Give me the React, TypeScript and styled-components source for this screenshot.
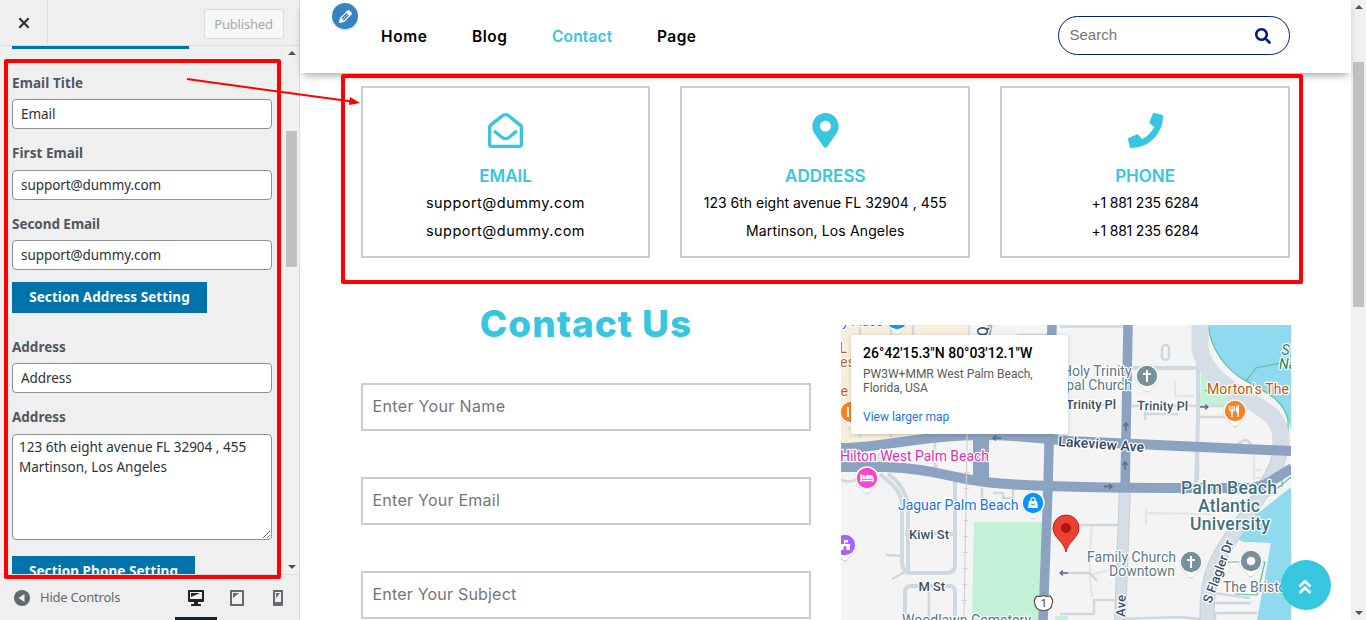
import React from "react";
import styled, { createGlobalStyle } from "styled-components";
import { FaRegEnvelopeOpen, FaMapMarkerAlt, FaPhone, FaSearch } from "react-icons/fa";

const GlobalStyle = createGlobalStyle`
  * { box-sizing: border-box; }
  body { margin: 0; background: #fff; overflow: hidden; }
`;

const adminFont = `"Noto Sans", "Open Sans", sans-serif`;
const themeFont = `Inter, "Open Sans", sans-serif`;
const accent = "#36c6e0";

const Screen = styled.div`
  position: relative;
  display: flex;
  width: 1366px;
  height: 620px;
  overflow: hidden;
`;

/* ---------- customizer sidebar ---------- */

const Sidebar = styled.aside`
  display: flex;
  flex-direction: column;
  flex: none;
  width: 300px;
  background: #efefef;
  border-right: 1px solid #dcdcde;
  font-family: ${adminFont};
`;

const SidebarHeader = styled.div`
  display: flex;
  justify-content: space-between;
  flex: none;
  height: 46px;
  border-bottom: 1px solid #dcdcde;
`;

const CloseButton = styled.button`
  display: flex;
  align-items: center;
  justify-content: center;
  width: 48px;
  height: 45px;
  padding: 1px 0 0;
  border: 0;
  border-right: 1px solid #dcdcde;
  background: none;
`;

const PublishButton = styled.button`
  width: 80px;
  height: 30px;
  margin: 9px 15px 0 0;
  padding: 0 1px 0 0;
  border: 1px solid #dcdcde;
  border-radius: 3px;
  background: #f6f7f7;
  color: #a7aaad;
  font: 13px ${adminFont};
  letter-spacing: -0.2px;
`;

const SidebarBody = styled.div`
  display: flex;
  flex: 1;
  min-height: 0;
`;

const Controls = styled.div`
  flex: 1;
  overflow: hidden;
  padding-left: 12px;
`;

const PreviousHeading = styled.div`
  width: 177px;
  height: 3px;
  margin-bottom: 21.9px;
  background: #0073aa;
`;

const Field = styled.label`
  display: block;
  width: 260px;
  & + & { margin-top: 12.3px; }
`;

const FieldLabel = styled.span<{ $spacing: number }>`
  display: block;
  height: 28.2px;
  line-height: 24px;
  color: #50575e;
  font-size: 13.5px;
  font-weight: 700;
  letter-spacing: ${(p) => p.$spacing}px;
`;

const TextInput = styled.input`
  display: block;
  width: 260px;
  height: 30px;
  padding: 0 8px;
  border: 1px solid #8c8f94;
  border-radius: 4px;
  background: #fff;
  color: #2c3338;
  font: 13.5px ${adminFont};
  letter-spacing: -0.07px;
`;

const TextArea = styled.textarea`
  display: block;
  width: 260px;
  height: 106px;
  padding: 2px 6px;
  border: 1px solid #8c8f94;
  border-radius: 4px;
  background: #fff;
  color: #2c3338;
  font: 13.5px/20px ${adminFont};
`;

const SectionHeading = styled.h3<{ $width: number; $above: number }>`
  width: ${(p) => p.$width}px;
  height: 31px;
  margin: ${(p) => p.$above}px 0 21.8px;
  background: #0073aa;
  color: #fff;
  font-size: 13.5px;
  font-weight: 700;
  line-height: 30px;
  text-align: center;
  letter-spacing: 0.07px;
  white-space: nowrap;
`;

const ScrollTrack = styled.div`
  display: flex;
  flex-direction: column;
  align-items: center;
  flex: none;
  width: 15px;
  background: #f1f1f1;
`;

const ScrollArrow = styled.div<{ $down?: boolean }>`
  flex: none;
  width: 0;
  height: 0;
  margin: ${(p) => (p.$down ? "auto 0 5px" : "5px 0 0")};
  border: 4px solid transparent;
  ${(p) => (p.$down ? "border-bottom: 0; border-top-color: #505050;" : "border-top: 0; border-bottom-color: #505050;")}
`;

const ScrollThumb = styled.div<{ $offset: number; $length: number }>`
  width: 11px;
  height: ${(p) => p.$length}px;
  margin-top: ${(p) => p.$offset}px;
  background: #c1c1c1;
`;

const SidebarFooter = styled.div`
  display: flex;
  align-items: center;
  flex: none;
  height: 46px;
  padding-left: 14px;
  border-top: 1px solid #dcdcde;
  color: #646970;
`;

const HideControls = styled.button`
  display: flex;
  align-items: center;
  gap: 10px;
  flex: 1;
  padding: 0;
  border: 0;
  background: none;
  color: inherit;
  font: 13px ${adminFont};
  letter-spacing: -0.22px;
`;

const HideLabel = styled.span`
  padding-bottom: 2px;
`;

const DeviceButton = styled.button<{ $active?: boolean }>`
  display: flex;
  align-items: center;
  justify-content: center;
  width: 42px;
  height: 45px;
  margin-left: -1px;
  padding: 3px 0 0;
  border: 0;
  border-bottom: 3px solid ${(p) => (p.$active ? "#1d2327" : "transparent")};
  background: none;
  color: ${(p) => (p.$active ? "#1d2327" : "#646970")};
`;

/* ---------- site preview ---------- */

const Preview = styled.main`
  display: flex;
  flex-direction: column;
  width: 1051px;
  font-family: ${themeFont};
`;

const SiteHeader = styled.header`
  position: relative;
  display: flex;
  align-items: flex-start;
  flex: none;
  height: 73px;
  padding-left: 81px;
  background: #fff;
  box-shadow: 0 5px 8px -3px rgba(0, 0, 0, 0.38);
`;

const EditBadge = styled.button`
  position: absolute;
  left: 32px;
  top: 3px;
  display: flex;
  align-items: center;
  justify-content: center;
  width: 26px;
  height: 26px;
  padding: 0;
  border: 0;
  border-radius: 50%;
  background: #3582c4;
  box-shadow: 0 2px 1px rgba(46, 68, 83, 0.15);
`;

const Nav = styled.nav`
  display: flex;
  flex: 1;
  line-height: 73px;
`;

const NavLink = styled.a<{ $active?: boolean; $width: number; $spacing: number }>`
  width: ${(p) => p.$width}px;
  color: ${(p) => (p.$active ? accent : "#000")};
  font-size: 15.5px;
  font-weight: 600;
  letter-spacing: ${(p) => p.$spacing}px;
`;

const SearchBox = styled.form`
  display: flex;
  align-items: center;
  width: 232px;
  height: 39px;
  margin: 16px 61px 0 0;
  padding: 0 18px 0 10.5px;
  border: 1px solid #001c80;
  border-radius: 20px;
  color: #001c80;
`;

const SearchInput = styled.input`
  flex: 1;
  min-width: 0;
  padding: 0 0 2px;
  border: 0;
  background: none;
  font: 15px "Liberation Sans", Arial, sans-serif;
  &::placeholder { color: #757575; }
`;

const Cards = styled.section`
  display: grid;
  grid-template-columns: repeat(3, 1fr);
  gap: 30px;
  width: 929.4px;
  margin: 13px 0 0 60.6px;
`;

const Card = styled.article`
  display: flex;
  flex-direction: column;
  align-items: center;
  height: 172px;
  padding-top: 25px;
  border: 2px solid #ccc;
  color: ${accent};
`;

const CardTitle = styled.h4`
  margin: 15px 0 0;
  font-size: 17px;
  font-weight: 600;
  line-height: 26px;
`;

const CardLine = styled.p<{ $size: number; $spacing: number }>`
  margin: 0;
  color: #000;
  font-size: ${(p) => p.$size}px;
  line-height: 28px;
  letter-spacing: ${(p) => p.$spacing}px;
  white-space: nowrap;
`;

const ContactArea = styled.section`
  display: grid;
  grid-template-columns: 450px 450px;
  gap: 30px;
  margin-left: 61px;
`;

const Form = styled.form`
  display: flex;
  flex-direction: column;
`;

const FormTitle = styled.h2`
  height: 125px;
  margin: 0;
  padding-top: 41px;
  color: ${accent};
  font-size: 37px;
  font-weight: 800;
  line-height: 50px;
  letter-spacing: 1px;
  text-align: center;
`;

const FormInput = styled.input<{ $spacing: number }>`
  height: 48px;
  margin-bottom: 46px;
  padding: 0 9.5px 2px;
  border: 2px solid #ccc;
  font: 16px ${themeFont};
  letter-spacing: ${(p) => p.$spacing}px;
  &::placeholder { color: #757575; }
`;

const MapFrame = styled.div`
  position: relative;
  height: 295px;
  margin-top: 67px;
`;

const MapCard = styled.div`
  position: absolute;
  left: 10px;
  top: 10px;
  width: 217px;
  height: 99px;
  padding: 9px 12px;
  border-radius: 2px;
  background: #fff;
  box-shadow: 0 1px 4px rgba(0, 0, 0, 0.2);
  font: 12px/14px Roboto, sans-serif;
  color: #5b5b5b;
`;

const Place = styled.div`
  margin-bottom: 5px;
  color: #000;
  font-size: 14px;
  font-weight: 500;
  line-height: 18px;
  white-space: nowrap;
`;

const MapLink = styled.a`
  display: block;
  margin-top: 15px;
  color: #1a73e8;
`;

const ScrollTop = styled.button`
  position: absolute;
  left: 1281px;
  top: 560px;
  display: flex;
  align-items: center;
  justify-content: center;
  width: 50px;
  height: 50px;
  padding: 3px 2px 0 0;
  border: 0;
  border-radius: 50%;
  background: ${accent};
`;

const Highlight = styled.div<{ $x: number; $y: number; $w: number; $h: number }>`
  position: absolute;
  left: ${(p) => p.$x}px;
  top: ${(p) => p.$y}px;
  width: ${(p) => p.$w}px;
  height: ${(p) => p.$h}px;
  border: 4px solid #f00;
  border-radius: 2px;
  pointer-events: none;
`;

const Arrow = styled.svg`
  position: absolute;
  left: 180px;
  top: 70px;
  pointer-events: none;
`;

function Dashicon({ d, size = 20, color = "currentColor" }: { d: string; size?: number; color?: string }) {
  return (
    <svg width={size} height={size} viewBox="0 0 20 20" fill={color}>
      <path d={d} />
    </svg>
  );
}

const icons = {
  close: "M14.95 6.46L11.41 10l3.54 3.54-1.41 1.41L10 11.42l-3.53 3.53-1.42-1.42L8.58 10 5.05 6.47l1.42-1.42L10 8.58l3.54-3.53z",
  edit: "M13.89 3.39l2.71 2.72c.46.46.42 1.24.03 1.64l-8.01 8.02-5.56 1.16 1.16-5.58s7.6-7.63 7.99-8.03c.39-.39 1.22-.39 1.68.07zm-2.73 2.79l-5.59 5.61 1.11 1.11 5.54-5.65zm-2.97 8.23l5.58-5.6-1.07-1.08-5.59 5.6z",
  desktop: "M3 2h14c.55 0 1 .45 1 1v10c0 .55-.45 1-1 1h-5v2h2c.55 0 1 .45 1 1v1H5v-1c0-.55.45-1 1-1h2v-2H3c-.55 0-1-.45-1-1V3c0-.55.45-1 1-1zm13 9V4H4v7h12zM5 5h9L5 9V5z",
  tablet: "M4 2h12c.55 0 1 .45 1 1v14c0 .55-.45 1-1 1H4c-.55 0-1-.45-1-1V3c0-.55.45-1 1-1zm11 14V4H5v12h10zM6 5h6l-6 5V5z",
  phone: "M6 2h8c.55 0 1 .45 1 1v14c0 .55-.45 1-1 1H6c-.55 0-1-.45-1-1V3c0-.55.45-1 1-1zm7 12V4H7v10h6zM8 5h4l-4 5V5z",
};

/* ---------- street map ---------- */

const MapSvg = styled.svg`
  display: block;
  text {
    font-family: Roboto, sans-serif;
    paint-order: stroke;
    stroke: #fff;
    stroke-width: 2.4px;
    stroke-linejoin: round;
  }
`;

function Pin({ x, y, color, children }: { x: number; y: number; color: string; children?: React.ReactNode }) {
  return (
    <g transform={`translate(${x} ${y})`}>
      <path d="M0 16.5C-1.5 16.5-4 12-8 9.300A12 12 0 1 1 8 9.300C4 12 1.500 16.500 0 16.500Z" fill="#5f6b76" opacity="0.35" />
      <path d="M0 15.500C-1.500 15.500-4 11.500-8 8.700A11.800 11.800 0 1 1 8 8.700C4 11.500 1.500 15.500 0 15.500Z" fill="#fff" />
      <circle r="10.200" fill={color} />
      {children}
    </g>
  );
}

type Label = [text: string, x: number, y: number, width: number, size: number, color: string, weight?: number, rotate?: number];

const street = "#3c4f66";
const labels: Label[] = [
  ["y Place", 842, 326, 41, 14, "#1a73e8"],
  ["L", 839.500, 353, 8, 14, "#c5621a"],
  ["es", 840, 367, 15, 14, "#c5621a"],
  ["e", 840.500, 396, 8, 14, "#c5621a"],
  ["Hilton West Palm Beach", 840, 461, 149, 14, "#e52cb0"],
  ["Jaguar Palm Beach", 898, 510, 120.500, 14, "#1a73e8"],
  ["Kiwi St", 909, 539, 40, 13, street, 500],
  ["M St", 918.500, 591, 26.500, 13, street, 500],
  ["Woodlawn Cemetery", 902, 625, 129, 14, "#4d7485"],
  ["Holy Trinity", 1062, 376, 69.500, 14, "#5b7886"],
  ["Episcopal Church", 1025, 390, 107, 14, "#5b7886"],
  ["Trinity Pl", 1066, 409, 50, 13, street, 500],
  ["Trinity Pl", 1137, 410, 51, 13, street, 500, 1],
  ["Lakeview Ave", 1058, 446, 86, 14, "#2f4565", 500, 4],
  ["Morton's The", 1207, 394, 82, 14, "#c5570c"],
  ["Palm Beach", 1181, 494, 96, 17.500, "#416f83", 500],
  ["Atlantic", 1198, 512, 62, 17.500, "#416f83", 500],
  ["University", 1190, 530, 80, 17.500, "#416f83", 500],
  ["Family Church", 1087, 562, 89, 14, "#5b7886"],
  ["Downtown", 1109, 576, 66, 14, "#5b7886"],
  ["The Bristol", 1223, 592, 67, 14, "#5b7886"],
  ["S Flagler Dr", 1211, 604, 66, 13, street, 500, -70],
  ["Ave", 1125, 617, 22, 13, street, 500, -88],
  ["Q", 988, 336, 11, 14, street, 500, -90],
];

const minorRoads = [
  "M880 474C890 483 902 490 902 506V562Q902 573 912 573H946Q955 573 955 565V480",
  "M888 474C900 482 908 495 908 510V571",
  "M905 622V592Q905 586 911 586H949Q955 586 955 592V622",
  "M905 534H955",
];

const thinRoads = [
  "M929 586V622", "M886 555L902 556", "M892 579L905 572", "M935 440V470", "M860 325V437", "M891 325V437", "M913 325V340",
  "M1060 326.500H1123", "M1060 405H1116", "M1132 406H1235", "M1145 411V420M1145 414H1178", "M1198 417H1232", "M1198 480V452",
  "M1060 525H1119", "M1060 573H1090L1097 581", "M1060 614H1094V600H1118",
  "M1118 619L1180 617L1210 620", "M1207 592L1250 598", "M1208 603H1251", "M1215 620V613H1257", "M982 488V500", "M993 493H1003V498H1013V489",
  "M841 480Q855 485 860 474", "M935 473L937 465", "M1017 335H1047",
];

function StreetMap() {
  const main = "#8ba3c1";
  const minor = "#ced8e1";
  const light = "#d5dee6";
  const line = { fill: "none", strokeLinejoin: "round" as const };
  return (
    <MapSvg width="450" height="295" viewBox="841 325 450 295">
      <rect x="841" y="325" width="450" height="295" fill="#f4f4f4" />
      <path d="M841 325H970L966 436Q905 440 841 450Z" fill="#f8eedb" />
      <path d="M841 457L885 452V464H841Z" fill="#c3f1d5" />
      <path d="M974 522H1043L1039 620H972Z" fill="#c3f1d5" />
      <path d="M1055 616H1068V620H1055Z" fill="#c3f1d5" />
      <path d="M1201 366L1222 387L1236 402L1226 406L1200 404Z" fill="#c3f1d5" />
      <path d="M1208 325C1211 350 1226 370 1246 381S1284 400 1288 420L1291 430V325Z" fill="#8fdaee" />
      <path d="M1291 487L1247 522L1238 538Q1240 543 1250 542L1271 543L1257 620H1291Z" fill="#8fdaee" />
      <g {...line} stroke="#63bd96" strokeWidth="1.200">
        <path d="M1208 325C1211 350 1226 370 1246 381S1284 400 1288 420V452" />
        <path d="M1246 381L1256 368L1291 361" />
        <path d="M1291 477L1255 507L1233 542L1222 562H1265L1257 595L1235 594" />
        <path d="M1205 390Q1215 396 1220 392T1236 402" />
        <path d="M1282 487V479L1291 473" />
      </g>
      <g {...line} stroke="#e2e4e6" strokeWidth="2">
        <path d="M1146 509V525M1146 513L1211 514" />
        <path d="M1175 381V396H1194" />
        <path d="M1092 525C1088 560 1090 590 1093 597M1091 575L1115 568" />
        <path d="M1254 452V480M1254 470H1262M1254 478H1266" />
      </g>
      <g {...line} stroke={minor} strokeWidth="2.500">
        {thinRoads.map((d) => <path key={d} d={d} />)}
        <rect x="1162" y="345" width="7" height="15" rx="3.500" />
        <path d="M1238 445Q1245 436 1251 444" />
      </g>
      <g {...line} stroke={minor} strokeWidth="4">
        {minorRoads.map((d) => <path key={d} d={d} />)}
        <path d="M1130 368H1199" />
        <path d="M1198 355V420L1196 485" />
      </g>
      <path {...line} d="M1200 325V348C1204 372 1224 386 1240 395C1262 409 1281 415 1281 440C1281 462 1272 475 1262 492C1246 520 1216 552 1211 578C1207 595 1207 605 1207 622" stroke="#c3cfda" strokeWidth="15" />
      <path {...line} d="M1200 324V348C1204 372 1224 386 1240 395C1262 409 1281 415 1281 440C1281 462 1272 475 1262 492C1246 520 1216 552 1211 578C1207 595 1207 605 1207 622" stroke={light} strokeWidth="13" />
      <path {...line} d="M1200 324V348C1204 372 1224 386 1240 395C1262 409 1281 415 1281 440V452" stroke={light} strokeWidth="17" />
      <path {...line} d="M1125 487L1120 622" stroke="#c3cfda" strokeWidth="12" />
      <path {...line} d="M1125 487L1120 622" stroke={light} strokeWidth="10" />
      <g {...line} stroke={main}>
        <path d="M841 448C880 448 925 435 980 435C1020 435 1040 438 1070 441L1291 451" strokeWidth="10" />
        <path d="M841 467H885C930 468 950 478 985 482S1100 488 1180 488H1245C1265 488 1272 480 1292 468" strokeWidth="10" />
        <path d="M981 435V482" strokeWidth="16" />
        <path d="M990 325L987 340" strokeWidth="5" />
        <path d="M1052 325L1048 487L1043 622" strokeWidth="9.500" />
        <path d="M1128 325L1125 490" strokeWidth="9.500" />
      </g>
      <path {...line} d="M969 325L964 622" stroke="#cfd1d3" strokeWidth="1.200" />
      <path {...line} d="M967 440L964 622" stroke="#cfd1d3" strokeWidth="5" strokeDasharray="1 15" />
      <g {...line} stroke="#56707e" strokeWidth="1.400">
        <path d="M1001 438H993M996 435.500L993 438L996 440.500" />
        <path d="M1104 486.500H1112M1109 484L1112 486.500L1109 489" />
        <path d="M1200 407H1208M1205 404.500L1208 407L1205 409.500" />
        <path d="M1126 431V423M1123.500 426L1126 423L1128.500 426" />
        <path d="M1125 470V462M1122.500 465L1125 462L1127.500 465" />
        <path d="M1068 573H1060M1063 570.500L1060 573L1063 575.500" />
      </g>
      {labels.map(([text, x, y, width, size, color, weight = 400, rotate = 0]) => (
        <text key={text + x} x={x} y={y} textLength={width} fontSize={size} fontWeight={weight} fill={color} transform={`rotate(${rotate} ${x} ${y})`}>
          {text}
        </text>
      ))}
      <g fontSize="14" fontStyle="italic" fill="#1b8064">
        <text x="1281.500" y="355">S</text>
        <text x="1279" y="369">Nat</text>
      </g>
      <Pin x={897} y={319} color="#1294ff" />
      <Pin x={851} y={412} color="#fb8122">
        <path d="M-3-5V5M3-5V5" stroke="#fff" strokeWidth="2" />
      </Pin>
      <Pin x={867} y={478} color="#f845cb">
        <path d="M-6-4V4M6 4V0H-6M-6 2.500H6" stroke="#fff" strokeWidth="1.400" fill="none" />
        <path d="M-1-3H4Q6-3 6 0H-1Z" fill="#fff" />
        <circle cx="-3.300" cy="-1.700" r="1.400" fill="#fff" />
      </Pin>
      <Pin x={845} y={545} color="#a963f7">
        <path d="M-5 5V-1H-1V-5H3V-2.500H0V-1H5V5H1.500V2.500A1.500 1.500 0 0 0-1.500 2.500V5Z" fill="#fff" />
      </Pin>
      <Pin x={1033} y={503} color="#0a93ff">
        <path d="M-4-2H4L5 5H-5Z" fill="#fff" />
        <path d="M-2-2V-4Q0-7 2-4V-2" fill="none" stroke="#fff" strokeWidth="1.300" />
        <path d="M-1.800 1Q0 3 1.800 1" fill="none" stroke="#0a93ff" />
      </Pin>
      <Pin x={1147} y={376} color="#78909c">
        <path d="M0-6V6M-4-2H4" stroke="#fff" strokeWidth="2" />
      </Pin>
      <Pin x={1235} y={411} color="#fb8122">
        <path d="M-3-5V6M3-5V6" stroke="#fff" strokeWidth="1.600" />
        <path d="M-5.500-5V-2Q-5.500 0-3 0T-.500-2V-5" stroke="#fff" strokeWidth="1.300" fill="none" />
        <path d="M3-6Q0-4 1 1H3.800V-6Z" fill="#fff" />
      </Pin>
      <Pin x={1191} y={562} color="#78909c">
        <path d="M0-6V6M-4-2H4" stroke="#fff" strokeWidth="2" />
      </Pin>
      <Pin x={1251} y={561} color="#78909c">
        <circle r="4.300" fill="#fff" />
      </Pin>
      <path d="M1037 596Q1040 597 1043.500 595.500Q1047 597 1050 596Q1054 600 1052 604Q1052 610 1043.500 610.500Q1035 610 1035 604Q1033 600 1037 596Z" fill="#fff" stroke="#4b4b4b" strokeWidth="1.100" />
      <text x="1041" y="606.500" fontSize="10" fill="#333">1</text>
      <path d="M1066 552C1064 541 1053 538 1053 528A13 13 0 0 1 1079 528C1079 538 1068 541 1066 552Z" fill="#ea4335" stroke="#c5221f" strokeWidth="1" />
      <circle cx="1066" cy="528" r="5" fill="#b31412" />
    </MapSvg>
  );
}

const cards = [
  {
    icon: <FaRegEnvelopeOpen size={35} />,
    title: "EMAIL",
    lines: [
      { text: "support@dummy.com", size: 14.5, spacing: 0.47 },
      { text: "support@dummy.com", size: 14.5, spacing: 0.47 },
    ],
  },
  {
    icon: <FaMapMarkerAlt size={35} />,
    title: "ADDRESS",
    lines: [
      { text: "123 6th eight avenue FL 32904 , 455", size: 14, spacing: 0 },
      { text: "Martinson, Los Angeles", size: 14, spacing: 0.13 },
    ],
  },
  {
    icon: <FaPhone size={35} />,
    title: "PHONE",
    lines: [
      { text: "+1 881 235 6284", size: 14, spacing: -0.2 },
      { text: "+1 881 235 6284", size: 14, spacing: -0.2 },
    ],
  },
];

export default function App() {
  return (
    <Screen>
      <GlobalStyle />
      <Sidebar>
        <SidebarHeader>
          <CloseButton aria-label="Close"><Dashicon d={icons.close} size={22} color="#2c3338" /></CloseButton>
          <PublishButton>Published</PublishButton>
        </SidebarHeader>
        <SidebarBody>
          <Controls>
            <PreviousHeading />
            <Field><FieldLabel $spacing={0.1}>Email Title</FieldLabel><TextInput defaultValue="Email" /></Field>
            <Field><FieldLabel $spacing={0.05}>First Email</FieldLabel><TextInput defaultValue="support@dummy.com" /></Field>
            <Field><FieldLabel $spacing={-0.05}>Second Email</FieldLabel><TextInput defaultValue="support@dummy.com" /></Field>
            <SectionHeading $width={195} $above={12}>Section Address Setting</SectionHeading>
            <Field><FieldLabel $spacing={0}>Address</FieldLabel><TextInput defaultValue="Address" /></Field>
            <Field><FieldLabel $spacing={0}>Address</FieldLabel><TextArea defaultValue={"123 6th eight avenue FL 32904 , 455\nMartinson, Los Angeles"} /></Field>
            <SectionHeading $width={183} $above={16}>Section Phone Setting</SectionHeading>
          </Controls>
          <ScrollTrack>
            <ScrollArrow />
            <ScrollThumb $offset={76} $length={136} />
            <ScrollArrow $down />
          </ScrollTrack>
        </SidebarBody>
        <SidebarFooter>
          <HideControls>
            <svg width="16" height="16" viewBox="0 0 16 16">
              <circle cx="8" cy="8" r="8" fill="#646970" />
              <path d="M10.500 4V12L4.500 8Z" fill="#efefef" />
            </svg>
            <HideLabel>Hide Controls</HideLabel>
          </HideControls>
          <DeviceButton $active aria-label="Desktop"><Dashicon d={icons.desktop} /></DeviceButton>
          <DeviceButton aria-label="Tablet"><Dashicon d={icons.tablet} /></DeviceButton>
          <DeviceButton aria-label="Mobile"><Dashicon d={icons.phone} /></DeviceButton>
        </SidebarFooter>
      </Sidebar>

      <Preview>
        <SiteHeader>
          <EditBadge aria-label="Edit menu"><Dashicon d={icons.edit} size={19} color="#fff" /></EditBadge>
          <Nav>
            <NavLink $width={91} $spacing={0.6}>Home</NavLink>
            <NavLink $width={80} $spacing={0.5}>Blog</NavLink>
            <NavLink $width={105} $spacing={0.15} $active>Contact</NavLink>
            <NavLink $width={60} $spacing={0.45}>Page</NavLink>
          </Nav>
          <SearchBox>
            <SearchInput placeholder="Search" />
            <FaSearch size={16} />
          </SearchBox>
        </SiteHeader>
        <Cards>
          {cards.map((card) => (
            <Card key={card.title}>
              {card.icon}
              <CardTitle>{card.title}</CardTitle>
              {card.lines.map((line, i) => (
                <CardLine key={i} $size={line.size} $spacing={line.spacing}>{line.text}</CardLine>
              ))}
            </Card>
          ))}
        </Cards>
        <ContactArea>
          <Form>
            <FormTitle>Contact Us</FormTitle>
            <FormInput $spacing={0.35} placeholder="Enter Your Name" />
            <FormInput $spacing={0.25} placeholder="Enter Your Email" />
            <FormInput $spacing={0.2} placeholder="Enter Your Subject" />
          </Form>
          <MapFrame>
            <StreetMap />
            <MapCard>
              <Place>26°42'15.3"N 80°03'12.1"W</Place>
              PW3W+MMR West Palm Beach,<br />Florida, USA
              <MapLink>View larger map</MapLink>
            </MapCard>
          </MapFrame>
        </ContactArea>
      </Preview>
      <ScrollTrack>
        <ScrollArrow />
        <ScrollThumb $offset={53} $length={245} />
        <ScrollArrow $down />
      </ScrollTrack>

      <ScrollTop aria-label="Back to top">
        <svg width="14" height="16" viewBox="0 0 14 16" fill="none" stroke="#fff" strokeWidth="2.600">
          <path d="M1.500 7.500L7 2.200L12.500 7.500M1.500 14L7 8.700L12.500 14" />
        </svg>
      </ScrollTop>
      <Highlight $x={4} $y={59} $w={277} $h={520} />
      <Highlight $x={341} $y={74} $w={962} $h={210} />
      <Arrow width="184" height="40" viewBox="180 70 184 40">
        <path d="M187 79L352 101.500" stroke="#f00" strokeWidth="2" />
        <path d="M350 97L360 103L349 105Z" fill="#f00" />
      </Arrow>
    </Screen>
  );
}
